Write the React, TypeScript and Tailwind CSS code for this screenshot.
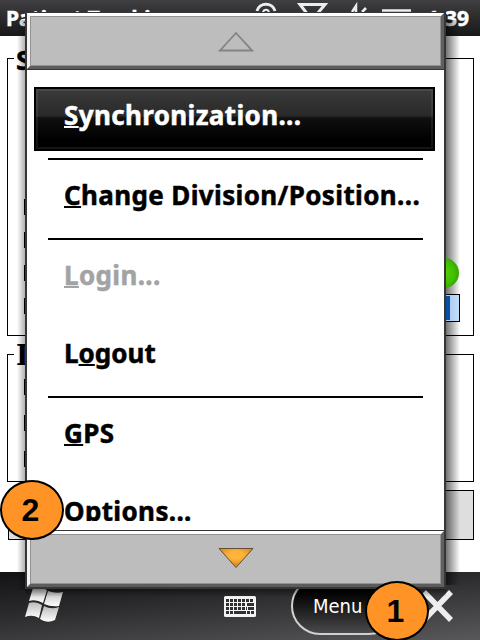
import React from 'react';

const itemText = "font-['Noto_Sans',sans-serif] text-[26px] leading-[34px] font-bold tracking-[0.36px] whitespace-nowrap [-webkit-text-stroke:0.5px_currentColor]";

function Key({ children }: { children: React.ReactNode }) {
  return (
    <span className="underline decoration-2 underline-offset-1 [text-decoration-skip-ink:none]">
      {children}
    </span>
  );
}

function Item({ before = '', hot, rest, className }: { before?: string; hot: string; rest: string; className: string }) {
  return (
    <div className={`h-[78px] shrink-0 pt-[18px] pl-[37px] ${itemText} ${className}`}>
      {before}
      <Key>{hot}</Key>
      {rest}
    </div>
  );
}

function Rule() {
  return <div className="mr-[21px] ml-[21px] h-[2px] shrink-0 bg-black" />;
}

function Dashes({ count, className }: { count: number; className: string }) {
  return (
    <div className={`flex w-px flex-col ${className}`}>
      {Array.from({ length: count }, (_, i) => (
        <i key={i} className="h-4 shrink-0 bg-black" />
      ))}
    </div>
  );
}

function Scroller({ children, className }: { children: React.ReactNode; className: string }) {
  return (
    <div className={`flex shrink-0 justify-center border-[3px] border-t-white border-r-[#606060] border-b-[#5c5c5c] border-l-[#f4f4f4] bg-[#bdbdbd] shadow-[inset_0_0_0_1px_#929292] ${className}`}>
      {children}
    </div>
  );
}

function TopBar() {
  return (
    <header className="flex h-9 overflow-hidden bg-gradient-to-b from-[#404042] via-[#2b2b2d] to-[#19191b] text-white">
      <div className="w-[250px] pt-[4px] pl-[6px] font-['Noto_Sans',sans-serif] text-[21px] leading-[29px] font-bold whitespace-nowrap [-webkit-text-stroke:0.5px_white]">
        Patient Tracking
      </div>
      <svg width="172" height="36" viewBox="250 0 172 36" fill="none" stroke="#e9eeee">
        <path d="M257 11C259 2 273 2 275 11" strokeWidth="3" />
        <path d="M263 12C264 9 268 9 269 12" strokeWidth="2" />
        <path d="M300 4.5H325L312 20Z" strokeWidth="3" />
        <path d="M352 12L356 6V12M362 12L366 8" strokeWidth="2.5" />
        <path d="M382 10.5H411" strokeWidth="2.5" />
      </svg>
      <div className="pt-[3px] pl-[2px] font-['Noto_Sans',sans-serif] text-[21px] leading-[31px] font-bold whitespace-nowrap [-webkit-text-stroke:0.5px_white]">
        <span className="inline-block w-[21px] text-right">1:</span>39
      </div>
    </header>
  );
}

function Page() {
  return (
    <main className="flex h-[536px] flex-col bg-white pl-[7px] pr-[6px]">
      <section className="mt-[22px] h-[278px] shrink-0 border border-black">
        <div className="mt-[-15px] ml-[6px] w-5 bg-white pl-[2px] font-['Noto_Sans',sans-serif] text-[27px] leading-[31px] font-bold [-webkit-text-stroke:0.5px_black]">S</div>
        <Dashes count={4} className="mt-[124px] ml-4 gap-[17px]" />
        <div className="relative z-10 mt-[-56px] flex flex-col items-end">
          <div className="mr-[14px] size-[30px] rounded-full bg-[radial-gradient(circle_at_45%_50%,#55d800_0%,#40bd00_55%,#278100_100%)]" />
          <div className="mt-[6px] mr-[13px] h-7 w-20 border border-black bg-gradient-to-r from-[#9fc2e6] from-80% to-[#c3defa] p-px">
            <div className="h-full w-[68px] bg-[#0651a5]" />
          </div>
        </div>
      </section>
      <section className="mt-[18px] h-[128px] shrink-0 border border-black">
        <div className="mt-[-14px] ml-[6px] w-5 bg-white pl-[2px] font-['DejaVu_Serif',serif] text-[27px] leading-[30px] font-bold">I</div>
        <Dashes count={3} className="mt-[8px] ml-4 gap-5" />
      </section>
      <div className="mt-2 ml-px h-[50px] shrink-0 border border-black bg-[#dedede]" />
    </main>
  );
}

function BottomBar() {
  return (
    <footer className="flex h-[68px] overflow-hidden bg-[linear-gradient(175deg,#131315_0%,#2b2b2d_40%,#58585b_100%)]">
      <svg width="290" height="68" viewBox="0 572 290 68" className="shrink-0">
        <defs>
          <linearGradient id="metal" x1="0" y1="0" x2="0" y2="1">
            <stop stopColor="#bbb" />
            <stop offset="1" stopColor="#fff" />
          </linearGradient>
        </defs>
        <g fill="url(#metal)">
          <path d="M33 588Q40 586 47 590L43 603Q36 599 29 601Z" />
          <path d="M48 591Q56 594 63 592L59 606Q51 607 44 604Z" />
          <path d="M29 603Q36 601 42 605L39 618Q32 614 25 617Z" />
          <path d="M44 606Q51 610 59 607L55 620Q47 624 40 619Z" />
        </g>
        <rect x="224" y="596" width="32" height="21" rx="1.5" fill="#f4f4f4" />
        <g stroke="#303032" strokeWidth="3" fill="none">
          <path d="M226 600.5H254" strokeDasharray="3 1" />
          <path d="M226 604.5H246" strokeDasharray="3 1" />
          <path d="M247 604.5H254" />
          <path d="M226 608.5H247" strokeDasharray="3 1" />
          <path d="M248 608.5H254" />
          <path d="M226 612.5H233M247 612.5H254" strokeDasharray="3 1" />
          <path d="M234 612.5H246" />
        </g>
      </svg>
      <div className="mt-[5px] ml-px flex h-[58px] w-[107px] shrink-0 items-center overflow-hidden rounded-[29px] border-2 border-[#d0d0d0] bg-gradient-to-b from-black via-[#19191a] to-[#4a4a4c] pl-[20px] font-['DejaVu_Sans_Condensed','DejaVu_Sans',sans-serif] text-[20px] text-white">
        Menu
      </div>
      <svg width="76" height="68" viewBox="400 572 76 68" className="ml-[2px] shrink-0">
        <path d="M424 592L451 620M451 592L424 620" stroke="#eee" strokeWidth="5.5" />
      </svg>
    </footer>
  );
}

function Popup() {
  return (
    <div className="absolute top-3 left-[25px] z-20 flex h-[577px] w-[421px] flex-col border-x-2 border-t border-b-2 border-[#363636] bg-white">
      <Scroller className="h-[56px] pt-[15px]">
        <svg width="36" height="22" viewBox="0 0 36 22" fill="none">
          <path d="M2 19.5L18 2L34 19.5Z" stroke="#858287" strokeWidth="1.8" />
        </svg>
      </Scroller>
      <div className="flex h-[452px] shrink-0 flex-col overflow-hidden border-t border-[#363636] pt-[17px]">
        <div className={`ml-[7px] mr-[9px] h-16 shrink-0 border-2 border-black bg-[linear-gradient(#3a3a3a_0%,#292929_45%,#101010_48%,#000_85%)] pt-[9px] pl-[28px] text-white shadow-[inset_0_0_0_2px_#ffffff14] ${itemText}`}>
          <Key>S</Key>ynchronization...
        </div>
        <div className="h-[7px] shrink-0" />
        <Rule />
        <Item hot="C" rest="hange Division/Position..." className="text-black" />
        <Rule />
        <Item hot="L" rest="ogin..." className="text-[#a3a3a3]" />
        <Item before="L" hot="o" rest="gout" className="tracking-[0px] text-black" />
        <Rule />
        <Item hot="G" rest="PS" className="text-black" />
        <Item hot="O" rest="ptions..." className="text-black" />
      </div>
      <div className="h-[10px] shrink-0 border-b border-[#363636]" />
      <Scroller className="grow pt-[13px]">
        <svg width="36" height="22" viewBox="0 0 36 22">
          <defs>
            <radialGradient id="amber" cx="50%" cy="35%" r="55%">
              <stop offset="35%" stopColor="#ffb53b" />
              <stop offset="100%" stopColor="#d88914" />
            </radialGradient>
          </defs>
          <path d="M1 1.5H35L18 20.5Z" fill="url(#amber)" stroke="#665039" />
        </svg>
      </Scroller>
    </div>
  );
}

function Badge({ label, className }: { label: string; className: string }) {
  return (
    <div className={`absolute z-30 flex h-[60px] w-16 items-center justify-center rounded-[50%] border-2 border-black bg-[#ff9326] pr-[3px] font-['Liberation_Sans',sans-serif] text-[32px] leading-none font-bold text-black ${className}`}>
      {label}
    </div>
  );
}

export default function App() {
  return (
    <div className="relative h-[640px] w-[480px] overflow-hidden bg-white">
      <TopBar />
      <Page />
      <BottomBar />
      <div className="absolute top-5 left-[17px] h-[570px] w-2 bg-gradient-to-r from-transparent to-black/30" />
      <div className="absolute top-5 left-[446px] h-[565px] w-[14px] bg-gradient-to-r from-black/55 to-transparent" />
      <div className="absolute top-[589px] left-[25px] h-2 w-[421px] bg-gradient-to-b from-black/40 to-transparent" />
      <Popup />
      <Badge label="2" className="top-[480px] left-0" />
      <Badge label="1" className="top-[581px] left-[365px]" />
    </div>
  );
}
